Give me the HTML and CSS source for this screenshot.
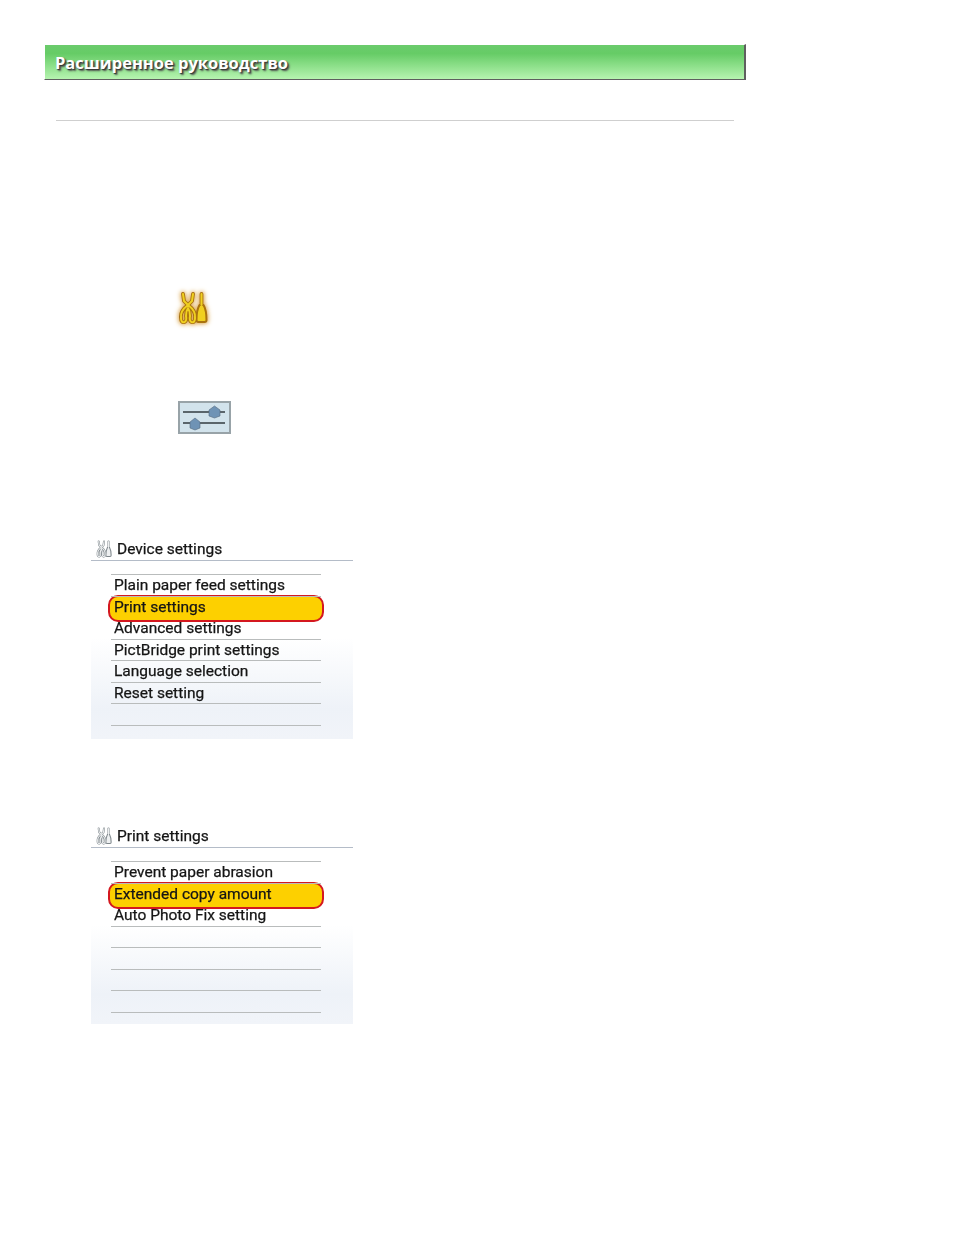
FILE: index.html
```html
<!DOCTYPE html>
<html lang="ru">
<head>
    <meta charset="UTF-8">
    <meta name="viewport" content="width=device-width, initial-scale=1.0">
    <title>Расширенное руководство</title>
    <link rel="stylesheet" href="styles.css">
</head>
<body>
    <svg class="defs" width="0" height="0" aria-hidden="true">
        <symbol id="tools" viewBox="0 0 30 34">
            <g class="tool-outer">
                <path d="M5 3 L6 10 L10 14 L14 10 L15 3"/>
                <path d="M10 14 Q2 20 3 27 Q3 32 6.500 31 Q9 30 8 25 Q8 20 10 17 Q12 20 12 25 Q11 30 13.500 31 Q17 32 17 27 Q18 20 10 14 Z"/>
                <path d="M23.500 3 L23.500 14"/>
                <path class="tool-body" d="M21.500 14 L25.500 14 Q28.500 19 28.500 29 Q28.500 31 26.500 31 L20.500 31 Q18.500 31 18.500 29 Q18.500 19 21.500 14 Z"/>
            </g>
            <g class="tool-inner">
                <path d="M5 3 L6 10 L10 14 L14 10 L15 3"/>
                <path d="M10 14 Q2 20 3 27 Q3 32 6.500 31 Q9 30 8 25 Q8 20 10 17 Q12 20 12 25 Q11 30 13.500 31 Q17 32 17 27 Q18 20 10 14 Z"/>
                <path d="M23.500 3 L23.500 14"/>
            </g>
        </symbol>
    </svg>

    <header class="banner">
        <h1 class="banner-title">Расширенное руководство</h1>
    </header>
    <hr class="rule">

    <div class="icon-block icon-block-tools">
        <svg class="icon-tools" width="30" height="34"><use href="#tools"/></svg>
    </div>

    <div class="icon-block icon-block-slider">
        <svg class="icon-slider" width="53" height="33" viewBox="0 0 53 33">
            <rect x="1" y="1" width="51" height="31" fill="#d2e3ec" stroke="#98a3a8" stroke-width="2"/>
            <rect x="5" y="10" width="42" height="2" fill="#5a656b"/>
            <rect x="5" y="21" width="42" height="2" fill="#5a656b"/>
            <path d="M31 9 L36.500 5 L42 9 L42 15 L36.500 17 L31 15 Z" fill="#6f93b5" stroke="#55697d" stroke-width="0.6"/>
            <path d="M12 21 L17 17 L22 21 L22 27 L17 29 L12 27 Z" fill="#6f93b5" stroke="#55697d" stroke-width="0.6"/>
        </svg>
    </div>

    <section class="screen screen-device">
        <div class="screen-title">
            <svg class="title-icon" width="16" height="18"><use href="#tools"/></svg>
            <span>Device settings</span>
        </div>
        <ul class="menu">
            <li>Plain paper feed settings</li>
            <li class="selected">Print settings</li>
            <li>Advanced settings</li>
            <li>PictBridge print settings</li>
            <li>Language selection</li>
            <li>Reset setting</li>
            <li></li>
        </ul>
    </section>

    <section class="screen screen-print">
        <div class="screen-title">
            <svg class="title-icon" width="16" height="18"><use href="#tools"/></svg>
            <span>Print settings</span>
        </div>
        <ul class="menu">
            <li>Prevent paper abrasion</li>
            <li class="selected">Extended copy amount</li>
            <li>Auto Photo Fix setting</li>
            <li></li>
            <li></li>
            <li></li>
            <li></li>
        </ul>
    </section>
</body>
</html>
```

FILE: styles.css
```css
body {
    margin: 0;
    background-color: #fff;
    font-family: Roboto, "Liberation Sans", sans-serif;
}
.defs {
    display: block;
    height: 0;
}
.banner {
    box-sizing: border-box;
    width: 702px;
    height: 36px;
    margin: 44px 0 0 44px;
    padding: 8px 0 0 11px;
    background: linear-gradient(#6bcb6c 0%, #66cc66 25%, #b6f4b0 100%);
    border-top: 1px solid #fff;
    border-left: 1px solid #fff;
    border-right: 2px solid #5f5f5f;
    border-bottom: 1px solid #5f5f5f;
}
.banner-title {
    margin: 0 0 0 -1px;
    font-family: "Open Sans", sans-serif;
    font-size: 16.5px;
    line-height: 20px;
    font-weight: 700;
    color: #fff;
    text-shadow: 1px 1px 1px #333, 2px 2px 2px #555;
}
.rule {
    width: 678px;
    height: 1px;
    margin: 40px 0 0 56px;
    border: none;
    background-color: #cfcfcf;
}
.icon-block {
    margin-left: 178px;
    line-height: 0;
}
.icon-block-tools {
    margin-top: 170px;
}
.icon-block-slider {
    margin-top: 76px;
}
.tool-outer,
.tool-inner {
    fill: none;
    stroke-linecap: round;
    stroke-linejoin: round;
}
.tool-outer {
    stroke: var(--tool-outer);
    stroke-width: 3.8;
}
.tool-inner {
    stroke: var(--tool-inner);
    stroke-width: 2;
}
.tool-body {
    fill: var(--tool-inner);
    stroke-width: 2;
}
.icon-tools {
    --tool-outer: #a9720f;
    --tool-inner: #f0d020;
    filter: blur(0.5px) drop-shadow(0 0 2px #dca858) drop-shadow(0 0 2px #eccb90);
}
.title-icon {
    --tool-outer: #7f878c;
    --tool-inner: #eef0f1;
}
.icon-slider {
    filter: blur(0.5px);
}
.screen {
    width: 262px;
    margin-left: 91px;
    background: linear-gradient(#fff 50%, #eef2f8 85%, #f1f4f9 100%);
    color: #151515;
    filter: blur(0.35px);
    -webkit-text-stroke: 0.25px #151515;
}
.screen-device {
    height: 201px;
    margin-top: 104px;
}
.screen-print {
    height: 199px;
    margin-top: 86px;
}
.screen-title {
    box-sizing: border-box;
    display: flex;
    align-items: center;
    gap: 5px;
    height: 23px;
    padding: 0 0 1px 5px;
    border-bottom: 1px solid #b4bcc8;
    font-size: 15.5px;
}
.menu {
    list-style: none;
    width: 210px;
    margin: 13px 0 0 20px;
    padding: 0;
    border-top: 1px solid #b9bcbc;
    font-size: 15.5px;
}
.menu li {
    box-sizing: border-box;
    position: relative;
    height: 21.5px;
    padding-left: 3px;
    line-height: 21px;
    border-bottom: 1px solid #b9bcbc;
}
.menu .selected {
    border-bottom-color: transparent;
}
.menu .selected::before {
    content: "";
    position: absolute;
    z-index: -1;
    top: -2px;
    left: -3px;
    right: -3px;
    bottom: -5px;
    box-sizing: border-box;
    border: 2.5px solid #d4181f;
    border-radius: 10px;
    background-color: #fdd000;
}
```
